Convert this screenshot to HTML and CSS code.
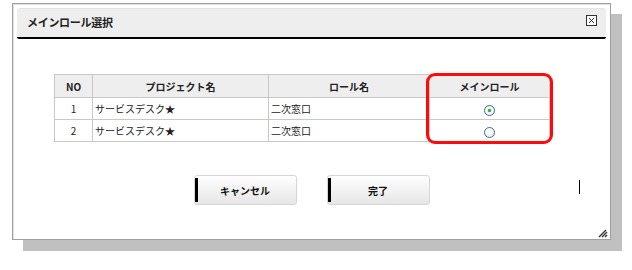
FILE: index.html
```html
<!DOCTYPE html>
<html lang="ja">
<head>
  <meta charset="UTF-8" />
  <title>メインロール選択</title>
  <link rel="stylesheet" href="styles.css">
</head>
<body>
  <div class="dialog">
    <div class="dialog-head">
      <span class="dialog-title">メインロール選択</span>
      <span class="close-btn">
        <svg width="11" height="11" viewBox="0 0 11 11">
          <rect x="0.5" y="0.5" width="10" height="10" fill="#fff" stroke="#333"/>
          <path d="M3 3 L8 8 M8 3 L3 8" stroke="#333" stroke-width="1"/>
        </svg>
      </span>
    </div>

    <div class="dialog-body">
      <!-- ロール一覧 -->
      <div class="table-wrap">
        <table class="role-table">
          <colgroup>
            <col class="c-no"><col class="c-project"><col class="c-role"><col class="c-main">
          </colgroup>
          <thead>
            <tr>
              <th>NO</th>
              <th>プロジェクト名</th>
              <th>ロール名</th>
              <th>メインロール</th>
            </tr>
          </thead>
          <tbody>
            <tr>
              <td class="num">1</td>
              <td>サービスデスク★</td>
              <td>二次窓口</td>
              <td class="radio-cell"><span class="radio checked"></span></td>
            </tr>
            <tr>
              <td class="num">2</td>
              <td>サービスデスク★</td>
              <td>二次窓口</td>
              <td class="radio-cell"><span class="radio"></span></td>
            </tr>
          </tbody>
        </table>
        <div class="highlight"></div>
      </div>

      <div class="actions">
        <button class="btn">キャンセル</button>
        <button class="btn">完了</button>
      </div>
      <span class="caret"></span>
    </div>

    <svg class="grip" width="10" height="10" viewBox="0 0 10 10">
      <path d="M1 9 L8 2 M4 9 L9 4 M7 9 L9 7" stroke="#333" stroke-width="1.4"/>
    </svg>
  </div>
</body>
</html>
```

FILE: styles.css
```css
* { box-sizing: border-box; }
html, body { height: 100%; }
body {
  margin: 0;
  padding-top: 3px;
  background: #fff;
  font-family: "Noto Sans CJK JP", "Liberation Sans", sans-serif;
  color: #222;
}
.dialog {
  position: relative;
  margin-left: 12px;
  width: 599px;
  height: 237px;
  border: 1px solid #a0a0a0;
  background: #fff;
  box-shadow: inset 1px 1px 0 #e2e2e2, 11px 11px 0 #c0c0c0;
  padding: 4px 4px 0 4px;
}
.dialog-head {
  display: flex;
  align-items: center;
  justify-content: space-between;
  height: 31px;
  padding: 0 9px 3px 10px;
  background: #eeeeee;
  border-top: 1px solid #e4e4e4;
  border-bottom: 2px solid #000;
  border-radius: 4px 4px 2px 2px;
}
.dialog-title {
  font-size: 11px;
  font-weight: bold;
  letter-spacing: -0.3px;
}
.close-btn { display: flex; margin-top: -2px; }

.dialog-body {
  position: relative;
  padding-top: 35px;
}
.table-wrap {
  position: relative;
  width: 495px;
  margin-left: 37px;
}
.role-table {
  width: 495px;
  border-collapse: collapse;
  table-layout: fixed;
  font-size: 10px;
  border: 1px solid #a8a8a8;
}
.c-no { width: 38px; }
.c-project { width: 176px; }
.c-role { width: 161px; }
.c-main { width: 120px; }
.role-table th,
.role-table td {
  border: 1px solid #c8c8c8;
  padding: 0 2px;
  white-space: nowrap;
}
.role-table th {
  height: 23px;
  background: #eeeeee;
  font-weight: bold;
  text-align: center;
}
.role-table td { height: 22px; }
.role-table td.num,
.role-table td.radio-cell { text-align: center; }

.radio {
  display: inline-block;
  width: 11px;
  height: 11px;
  margin-top: 2px;
  border: 1px solid #3f6b9a;
  border-radius: 50%;
  background: radial-gradient(circle at 40% 35%, #fff 30%, #dde4ec 100%);
  vertical-align: middle;
}
.radio.checked {
  background: radial-gradient(circle, #2ea52e 0, #49c049 1.6px, #fff 2.2px, #e4e8ee 100%);
}

.highlight {
  position: absolute;
  left: 372px;
  top: -1px;
  width: 127px;
  height: 71px;
  border: 3px solid #ff0a0a;
  border-radius: 9px;
  pointer-events: none;
}

.actions {
  display: flex;
  justify-content: center;
  gap: 30px;
  margin-top: 33px;
}
.btn {
  position: relative;
  width: 103px;
  height: 30px;
  border: 1px solid #d6d6d6;
  border-radius: 3px;
  background: linear-gradient(#ffffff, #e6e6e6);
  font-family: inherit;
  font-size: 10px;
  font-weight: bold;
  color: #111;
  cursor: pointer;
}
.btn::before {
  content: '';
  position: absolute;
  left: 0;
  top: 2px;
  bottom: 2px;
  width: 3px;
  background: #000;
}
.caret {
  position: absolute;
  left: 562px;
  top: 141px;
  width: 1px;
  height: 14px;
  background: #000;
}
.grip {
  position: absolute;
  right: 2px;
  bottom: 1px;
}
```
